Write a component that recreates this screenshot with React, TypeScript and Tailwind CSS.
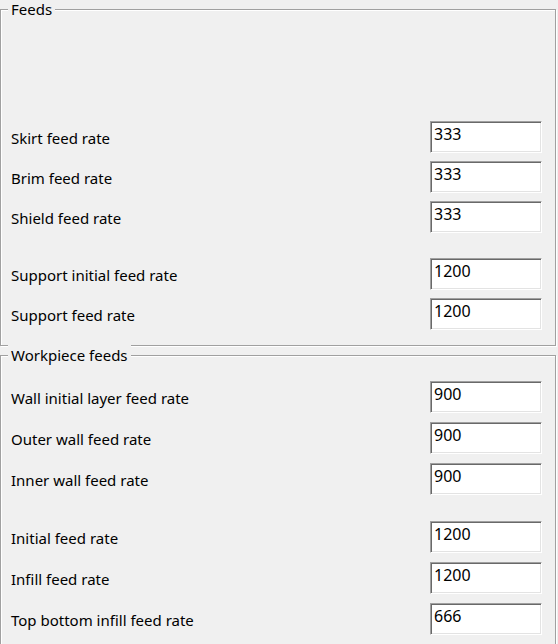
const feeds = [
  { label: 'Skirt feed rate', value: '333' },
  { label: 'Brim feed rate', value: '333' },
  { label: 'Shield feed rate', value: '333', gapAfter: true },
  { label: 'Support initial feed rate', value: '1200' },
  { label: 'Support feed rate', value: '1200' },
];

const workpiece = [
  { label: 'Wall initial layer feed rate', value: '900' },
  { label: 'Outer wall feed rate', value: '900' },
  { label: 'Inner wall feed rate', value: '900', gapAfter: true },
  { label: 'Initial feed rate', value: '1200' },
  { label: 'Infill feed rate', value: '1200' },
  { label: 'Top bottom infill feed rate', value: '666' },
];

type Row = { label: string; value: string; gapAfter?: boolean };

function FeedRow({ row }: { row: Row }) {
  return (
    <div className={`flex items-center justify-between ${row.gapAfter ? 'mb-[17px]' : ''}`}>
      <span className="pt-[2px] pl-[10px]">{row.label}</span>
      <input
        defaultValue={row.value}
        className="h-[32px] w-[112px] border border-t-[#a0a0a0] border-l-[#a0a0a0] border-r-white border-b-white bg-white px-[3px] pb-[8px] pt-[1px] text-[16px] text-black shadow-[inset_1px_1px_0_#696969,inset_-1px_-1px_0_#e3e3e3] outline-none"
      />
    </div>
  );
}

function GroupBox({ title, rows, className, gap }: { title: string; rows: Row[]; className: string; gap: string }) {
  return (
    <div
      className={`relative w-[556px] border border-[#a0a0a0] shadow-[inset_1px_1px_0_#fff,1px_1px_0_#fff] pr-[13px] ${className}`}
    >
      <span className="absolute left-[7px] top-[-12px] bg-[#f0f0f0] px-[3px] leading-[22px]">{title}</span>
      <div className={`flex flex-col ${gap}`}>
        {rows.map((r) => (
          <FeedRow key={r.label} row={r} />
        ))}
      </div>
    </div>
  );
}

export default function App() {
  return (
    <div className="h-[644px] w-[558px] overflow-hidden bg-[#f0f0f0] pt-[9px] font-['Noto_Sans',sans-serif] text-[15px] text-black">
      <GroupBox title="Feeds" rows={feeds} gap="gap-[8px]" className="h-[337px] pt-[111px]" />
      <GroupBox title="Workpiece feeds" rows={workpiece} gap="gap-[9px]" className="mt-[9px] h-[300px] pt-[25px]" />
    </div>
  );
}
